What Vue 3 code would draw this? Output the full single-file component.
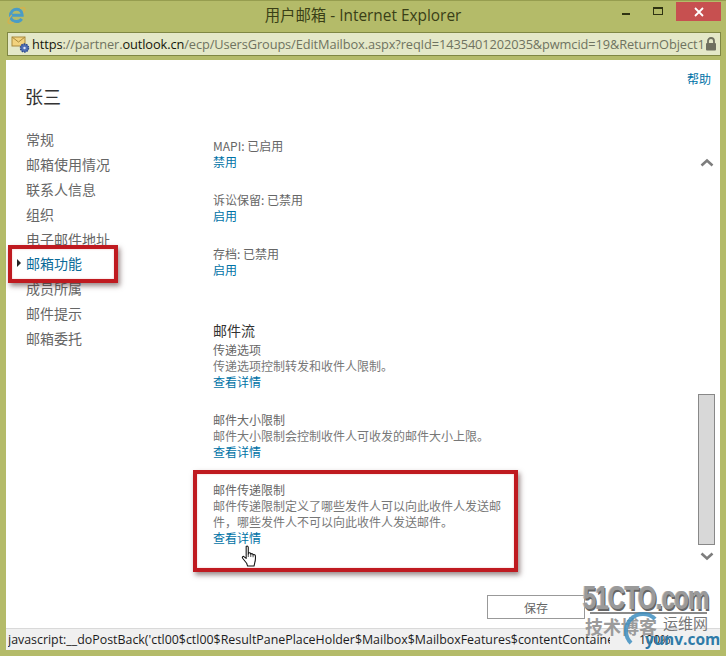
<script setup>
const navItems = ['常规', '邮箱使用情况', '联系人信息', '组织', '电子邮件地址', '邮箱功能', '成员所属', '邮件提示', '邮箱委托']
const toggles = [
  { label: 'MAPI: 已启用', action: '禁用' },
  { label: '诉讼保留: 已禁用', action: '启用' },
  { label: '存档: 已禁用', action: '启用' }
]
const flows = [
  { title: '传递选项', desc: '传递选项控制转发和收件人限制。' },
  { title: '邮件大小限制', desc: '邮件大小限制会控制收件人可收发的邮件大小上限。' },
  { title: '邮件传递限制', desc: '邮件传递限制定义了哪些发件人可以向此收件人发送邮件，哪些发件人不可以向此收件人发送邮件。' }
]
</script>

<template>
  <div class="window">
    <header class="titlebar">
      <svg class="ie" width="19" height="19" viewBox="0 0 19 19">
        <path d="M3.600 9.300h11.600c.2-3.600-2.200-6-5.400-6-3.600 0-6.300 2.800-6.300 6.400 0 3.400 2.600 5.900 6 5.900 2.300 0 4.100-1 5.200-2.700" fill="none" stroke="#4a9cc6" stroke-width="3" />
        <path d="M13 2.600c2.600-1.500 4.900-1.400 5 .4.100 1-.5 2.300-1.400 3.600M4.800 8.800C2.600 11.500 1 14 1 16c0 2 2.600 1.900 5.500.2" fill="none" stroke="#d9b04a" stroke-width="1.200" />
      </svg>
      <span class="title">用户邮箱 - Internet Explorer</span>
      <div class="controls">
        <span class="min"></span>
        <span class="max"></span>
        <span class="close">
          <svg width="10" height="10" viewBox="0 0 10 10"><path d="M1 1l8 8M9 1l-8 8" stroke="#fff" stroke-width="1.800" /></svg>
        </span>
      </div>
    </header>

    <div class="address">
      <svg class="site" width="20" height="19" viewBox="0 0 20 19">
        <rect x="1" y="2" width="13" height="9" fill="#f2d27e" stroke="#a98a3c" />
        <path d="M1 2l6.500 5L14 2" fill="none" stroke="#a98a3c" />
        <circle cx="13.500" cy="13" r="4" fill="#4f6fb5" stroke="#2d4a8c" stroke-width="1.500" stroke-dasharray="1.500 1" />
        <circle cx="13.500" cy="13" r="1.200" fill="#dfe6f5" />
      </svg>
      <span class="url"><b>https</b>://partner.<b>outlook.cn</b>/ecp/UsersGroups/EditMailbox.aspx?reqId=1435401202035&amp;pwmcid=19&amp;ReturnObject1</span>
      <svg class="lock" width="12" height="14" viewBox="0 0 12 14">
        <path d="M3 6V4a3 3 0 0 1 6 0v2" fill="none" stroke="#6f7060" stroke-width="1.800" />
        <rect x="1" y="6" width="10" height="7.500" rx="1" fill="#6f7060" />
      </svg>
    </div>

    <main class="page">
      <div class="columns">
        <aside class="side">
          <h1 class="name">张三</h1>
          <nav class="nav">
            <div v-for="item in navItems" :key="item" class="nav-item" :class="{ active: item === '邮箱功能' }">{{ item }}</div>
          </nav>
        </aside>

        <section class="details">
          <div v-for="t in toggles" :key="t.label" class="toggle">
            <div class="line">{{ t.label }}</div>
            <a class="link">{{ t.action }}</a>
          </div>
          <h2 class="flow-title">邮件流</h2>
          <div v-for="f in flows" :key="f.title" class="flow">
            <div class="line">{{ f.title }}</div>
            <div class="line muted">{{ f.desc }}</div>
            <a class="link">查看详情</a>
          </div>
        </section>

        <div class="rail">
          <a class="link help">帮助</a>
          <div class="scroll">
            <svg width="14" height="9" viewBox="0 0 14 9"><path d="M1.500 7.500L7 2.500l5.500 5" fill="none" stroke="#7d7d7d" stroke-width="2.600" /></svg>
            <div class="track"><div class="thumb"></div></div>
            <svg width="14" height="9" viewBox="0 0 14 9"><path d="M1.500 1.500L7 6.500l5.500-5" fill="none" stroke="#7d7d7d" stroke-width="2.600" /></svg>
          </div>
        </div>
      </div>
      <div class="footer"><button class="save">保存</button></div>
    </main>

    <footer class="status">
      <span class="status-text">javascript:__doPostBack('ctl00$ctl00$ResultPanePlaceHolder$Mailbox$MailboxFeatures$contentContaine</span>
      <span class="zoom-val">100%</span>
    </footer>

    <div class="mark mark-nav"></div>
    <div class="mark mark-flow"></div>

    <svg class="hand" width="18" height="23" viewBox="0 0 18 24">
      <path d="M5 1.500c1-.8 2.200-.3 2.200 1v7l.3-1.200c1.600-.6 2.300.2 2.300 1.200.9-.9 2.300-.5 2.400.8 1-.7 2.300-.2 2.400 1 .2 2.500.1 5-.6 7l-.8 3.700H6.500L5.500 19 1.300 13.800c-.8-1.200.6-2.500 1.700-1.500L5 14z" fill="#fff" stroke="#111" stroke-width="1.100" stroke-linejoin="round" />
      <path d="M7.200 9.500v3M9.800 9.500v3M12.200 10.300v2.500" stroke="#111" stroke-width=".8" />
    </svg>

    <div class="wm">
      <div class="wm-main">51CTO.com</div>
      <div class="wm-rule"></div>
      <div class="wm-blog">技术博客</div>
      <div class="wm-ring"></div>
      <div class="wm-yw">运维网</div>
      <div class="wm-url">yunv.com</div>
    </div>
  </div>
</template>

<style>
html, body { margin: 0; background: #b4bb69; }
</style>

<style scoped>
.window {
  position: relative;
  width: 726px;
  height: 656px;
  overflow: hidden;
  display: flex;
  flex-direction: column;
  background: #b4bb69;
  box-shadow: inset 0 1px 0 #969d4f;
  font-family: "Noto Sans CJK SC", "Open Sans", sans-serif;
  font-size: 12px;
  color: #666;
}
.titlebar {
  height: 32px;
  flex: none;
  display: flex;
  align-items: flex-start;
  position: relative;
}
.ie { margin: 6px 0 0 7px; }
.title {
  position: absolute;
  left: 0;
  right: 0;
  top: 5px;
  text-align: center;
  font: 15.400px/21px "Open Sans", "Noto Sans CJK SC", sans-serif;
  color: #3a3f17;
}
.controls {
  margin-left: auto;
  margin-right: 5px;
  display: flex;
  align-items: flex-start;
  position: relative;
}
.min { width: 8px; height: 2px; background: #2f3312; margin: 13px 23px 0 0; }
.max { width: 8px; height: 5px; border: 1px solid #2f3312; border-top-width: 2px; margin: 7px 13px 0 0; }
.close {
  width: 45px;
  height: 19px;
  margin-top: 2px;
  background: #c75050;
  display: flex;
  align-items: center;
  justify-content: center;
}
.address {
  height: 22px;
  flex: none;
  margin: 0 5px 0 7px;
  display: flex;
  align-items: center;
  background: #e4e8c8;
  border: 1px solid #7f8743;
}
.site { margin-left: 3px; flex: none; }
.url {
  margin-left: 1px;
  flex: 1;
  white-space: nowrap;
  overflow: hidden;
  font: 12.800px/20px "Open Sans", sans-serif;
  letter-spacing: -.1px;
  color: #6f7360;
}
.url b { font-weight: 400; color: #15170c; }
.lock { flex: none; margin-right: 3px; }
.page {
  flex: 1;
  margin: 4px 6px 0 6px;
  background: #fff;
  display: flex;
  flex-direction: column;
  min-height: 0;
}
.link { color: #0072a6; display: block; line-height: 16.500px; }
.columns { flex: 1; display: flex; min-height: 0; }
.side { width: 207px; flex: none; padding: 23px 0 0 20px; box-sizing: border-box; }
.name {
  margin: 0 0 0 -1px;
  font-size: 18px;
  font-weight: 400;
  line-height: 26px;
  color: #333;
}
.nav { margin-top: 18px; }
.nav-item {
  position: relative;
  height: 24.900px;
  line-height: 24.900px;
  font-size: 14px;
  color: #666;
}
.nav-item.active { color: #0a6a98; }
.nav-item.active::before {
  content: "";
  position: absolute;
  left: -9px;
  top: 8px;
  border-left: 4px solid #222;
  border-top: 4px solid transparent;
  border-bottom: 4px solid transparent;
}
.details { width: 292px; flex: none; padding-top: 78px; }
.line { line-height: 16px; }
.muted { color: #777; }
.toggle { margin-bottom: 21px; height: 33px; }
.flow-title {
  margin: 41px 0 2px;
  font-size: 14px;
  font-weight: 400;
  line-height: 20px;
  color: #333;
}
.flow { margin-bottom: 21px; height: 49px; line-height: 16px; }
.flow:last-child { height: auto; }
.rail {
  margin-left: auto;
  width: 40px;
  padding-right: 5px;
  box-sizing: border-box;
  display: flex;
  flex-direction: column;
  align-items: flex-end;
}
.help { margin: 10px 4px 0 0; line-height: 18px; }
.scroll {
  width: 17px;
  height: 473px;
  padding-top: 70px;
  box-sizing: border-box;
  display: flex;
  flex-direction: column;
  align-items: center;
}
.track {
  flex: 1;
  width: 17px;
  display: flex;
  flex-direction: column;
  justify-content: flex-end;
  padding-bottom: 7px;
  box-sizing: border-box;
}
.thumb {
  height: 151px;
  background: #d8d8d8;
  border: 1px solid #888;
  box-sizing: border-box;
}
.footer {
  height: 33px;
  flex: none;
  padding-left: 481px;
  box-sizing: border-box;
}
.save {
  display: block;
  width: 98px;
  height: 24px;
  padding: 0;
  background: #fff;
  border: 1px solid #999;
  font-family: "Noto Sans CJK SC", sans-serif;
  font-size: 12px;
  color: #666;
}
.status {
  height: 22px;
  flex: none;
  margin: 0 6px 6px;
  background: #f0f0f0;
  border-top: 1px solid #d9d9d9;
  box-sizing: border-box;
  display: flex;
  align-items: center;
  padding-left: 2px;
  font: 12.400px/20px "Open Sans", sans-serif;
  color: #1c1c1c;
}
.status-text { width: 602px; overflow: hidden; white-space: nowrap; flex: none; }
.zoom-val { margin-left: 29px; }
.mark {
  position: absolute;
  box-sizing: border-box;
  border: 4px solid #bf1a20;
  box-shadow: 2px 3px 5px rgba(70, 40, 40, .55), inset 0 0 2px rgba(190, 26, 32, .3);
}
.mark-nav { left: 8px; top: 245px; width: 110px; height: 38px; }
.mark-flow { left: 193px; top: 470px; width: 325px; height: 102px; }
.hand { position: absolute; left: 241px; top: 545px; }
.wm { position: absolute; left: 0; top: 0; width: 726px; height: 656px; pointer-events: none; }
.wm-main {
  position: absolute;
  left: 583px;
  top: 585px;
  font: 700 24px/25px "Liberation Sans", sans-serif;
  letter-spacing: -.8px;
  white-space: nowrap;
  color: #9a9a9a;
  text-shadow: 1px 1px 0 #666, -1px 0 0 #bbb;
  transform: scaleY(1.400);
}
.wm-rule { position: absolute; left: 590px; top: 612px; width: 117px; height: 2px; background: #8a8a8a; }
.wm-blog {
  position: absolute;
  left: 585px;
  top: 614px;
  font-size: 18px;
  line-height: 24px;
  font-weight: 700;
  color: #9b9b9b;
}
.wm-ring {
  position: absolute;
  left: 624px;
  top: 612px;
  width: 38px;
  height: 38px;
  box-sizing: border-box;
  border: 4px solid #3f8fc0;
  border-right-color: transparent;
  border-bottom-color: transparent;
  border-radius: 50%;
  opacity: .85;
}
.wm-yw {
  position: absolute;
  left: 663px;
  top: 613px;
  font-size: 15px;
  line-height: 20px;
  color: #777;
}
.wm-url {
  position: absolute;
  left: 645px;
  top: 630px;
  font: 700 15.500px/18px "Open Sans", sans-serif;
  color: #2f7ba8;
}
</style>
